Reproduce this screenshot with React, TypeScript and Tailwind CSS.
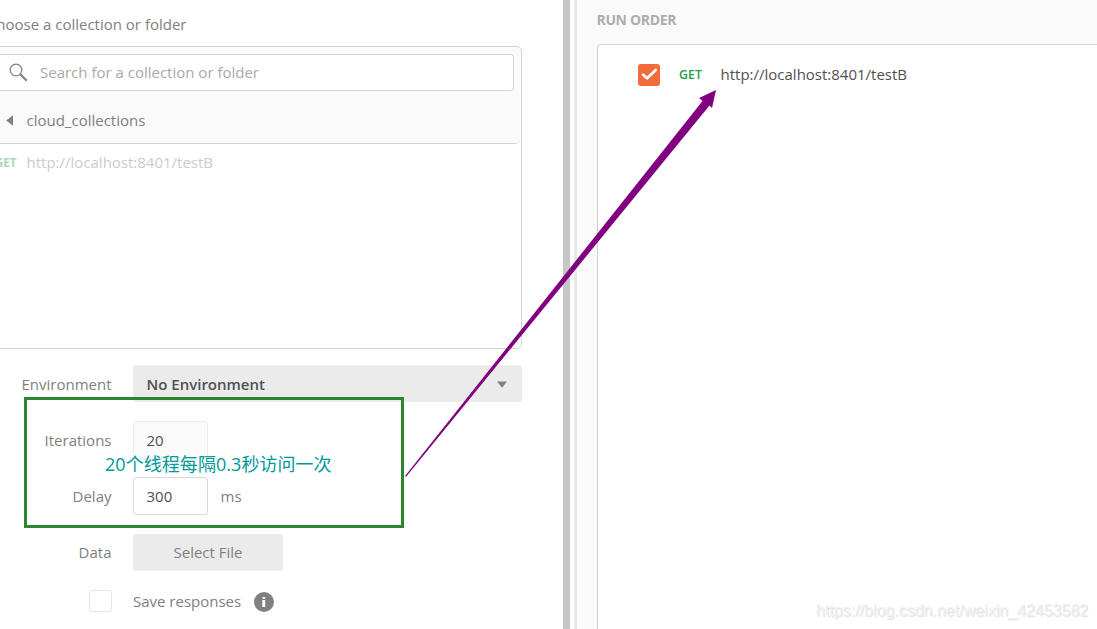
import React from "react";

function Label({ children }: { children: React.ReactNode }) {
  return <div className="w-[112px] shrink-0 pr-[0.5px] text-right text-[#808080]">{children}</div>;
}

function CollectionPicker() {
  return (
    <div className="-ml-3 mt-[46px] h-[303px] w-[534px] shrink-0 rounded-[5px] border border-[#d2d2d2] bg-white">
      <div className="mr-px h-[97px] rounded-[5px] border-b border-[#d2d2d2] bg-[#fafafa] pt-[7px]">
        <div className="ml-1 mr-[6px] flex h-[37px] items-center rounded-[3px] border border-[#d2d2d2] bg-white pl-[15px] text-[#a9a9a9]">
          <svg className="mr-3 h-[19px] w-[19px] shrink-0" viewBox="0 0 19 19" fill="none" stroke="#808080">
            <circle cx="7" cy="7" r="5.8" strokeWidth="1.3" />
            <path d="M11.2 11.2 L17.8 17.8" strokeWidth="2.2" />
          </svg>
          <span className="pb-[2px]">Search for a collection or folder</span>
        </div>
        <div className="mt-[19px] flex items-center pl-[17px] text-[#808080]">
          <svg className="mr-[13.5px] h-[11px] w-[7px]" viewBox="0 0 7 11">
            <path d="M7 0.3 V10.7 L0.2 5.5 Z" fill="#808080" />
          </svg>
          <span>cloud_collections</span>
        </div>
      </div>
      <div className="mt-2 flex items-center pl-[6px]">
        <span className="w-[31.5px] pt-[2px] text-[11.5px] font-bold leading-[18px] text-[#a8d9b7]">GET</span>
        <span className="text-[#cbcbcb]">http://localhost:8401/testB</span>
      </div>
    </div>
  );
}

function RunSettings() {
  return (
    <div className="mt-4 flex flex-col">
      <div className="flex h-[37px] items-center">
        <Label>Environment</Label>
        <div className="ml-[21px] flex h-[37px] w-[389px] items-center justify-between rounded-[3px] bg-[#ebebeb] pl-[13.5px] pr-[15px] font-semibold text-[#505050]">
          No Environment
          <svg className="mt-px h-[7px] w-[10px]" viewBox="0 0 10 7">
            <path d="M0 0.5 H10 L5 6.8 Z" fill="#808080" />
          </svg>
        </div>
      </div>
      <div className="mt-[19px] flex h-[38px] items-center">
        <Label>Iterations</Label>
        <div className="ml-[21px] flex h-[38px] w-[75px] items-center rounded-[3px] border border-[#ebebeb] bg-[#fafafa] pl-[12.5px] text-[#505050]">20</div>
      </div>
      <div className="mt-[18px] flex h-[38px] items-center">
        <Label>Delay</Label>
        <div className="ml-[21px] flex h-[38px] w-[75px] items-center rounded-[3px] border border-[#d8d8d8] bg-white pl-[12.5px] text-[#505050]">300</div>
        <span className="ml-[12.5px] text-[#808080]">ms</span>
      </div>
      <div className="mt-[19px] flex h-[37px] items-center">
        <div className="pb-[2px]">
          <Label>Data</Label>
        </div>
        <div className="ml-[21px] flex h-[37px] w-[150px] items-center justify-center rounded-[3px] bg-[#ebebeb] pb-[2px] text-[#808080]">Select File</div>
      </div>
      <div className="mt-[19px] flex h-[22px] items-center">
        <div className="ml-[89px] h-[22px] w-[23px] rounded-[3px] border border-[#e6e6e6] bg-white" />
        <span className="ml-[21px] text-[#808080]">Save responses</span>
        <svg className="ml-[13px] mt-[2px] h-5 w-5" viewBox="0 0 20 20">
          <circle cx="10" cy="10" r="10" fill="#808080" />
          <path d="M8.3 8 H11.2 V15 H8.3 Z M8.6 5 H11.2 V6.9 H8.6 Z" fill="#fff" />
        </svg>
      </div>
    </div>
  );
}

function RunOrder() {
  return (
    <section className="flex min-w-0 flex-1 flex-col border-l-[3px] border-[#e8e8e8] bg-[#fafafa] pl-5">
      <h2 className="-ml-[0.5px] mt-[10px] h-[34px] text-[14px] font-bold leading-5 tracking-[-0.35px] text-[#adadad]">RUN ORDER</h2>
      <div className="flex-1 rounded-tl-[4px] border-l border-t border-[#d2d2d2] bg-white pt-[19px]">
        <div className="flex h-[22px] items-center pl-10">
          <div className="flex h-[22px] w-[22px] items-center justify-center rounded-[3px] bg-[#f26b3a]">
            <svg className="h-[22px] w-[22px]" viewBox="0 0 22 22" fill="none">
              <path d="M5.1 10.8 L9.1 14.3 L17.8 6.1" stroke="#fff" strokeWidth="2.8" strokeLinecap="round" strokeLinejoin="round" />
            </svg>
          </div>
          <span className="ml-[19px] w-[41.5px] text-[12.4px] font-semibold text-[#26a04a]">GET</span>
          <span className="pb-[2px] text-[#505050]">http://localhost:8401/testB</span>
        </div>
      </div>
    </section>
  );
}

export default function App() {
  return (
    <main className="relative flex h-[629px] w-[1097px] overflow-hidden bg-white font-['Open_Sans',sans-serif] text-[15px] leading-5">
      <section className="relative flex w-[563px] shrink-0 flex-col">
        <div className="absolute right-[376.5px] top-[14px] whitespace-nowrap text-[#808080]">Choose a collection or folder</div>
        <CollectionPicker />
        <RunSettings />
      </section>
      <div className="mr-1 w-[7px] shrink-0 bg-[#c6c6c6]" />
      <RunOrder />

      <div className="absolute left-6 top-[397px] h-[131px] w-[380px] border-[3px] border-[#2e8530]" />
      <div className="absolute left-[105px] top-[452px] whitespace-nowrap font-['Open_Sans','Noto_Sans_CJK_SC',sans-serif] text-[18px] leading-6 tracking-[0.05px] text-[#009999]">20个线程每隔0.3秒访问一次</div>
      <svg className="absolute left-0 top-0 h-[629px] w-[1097px]" viewBox="0 0 1097 629">
        <path d="M404.7 476.5 L702.5 101 L699 98 L716 90 L712 108 L709.5 105.5 L406.3 476.5 Z" fill="#800080" />
      </svg>
      <div className="absolute left-[816px] top-[601px] whitespace-nowrap font-['Liberation_Sans',sans-serif] text-[16px] text-[#f0f0f0] [text-shadow:1px_1px_1px_#dedede]">https://blog.csdn.net/weixin_42453582</div>
    </main>
  );
}
